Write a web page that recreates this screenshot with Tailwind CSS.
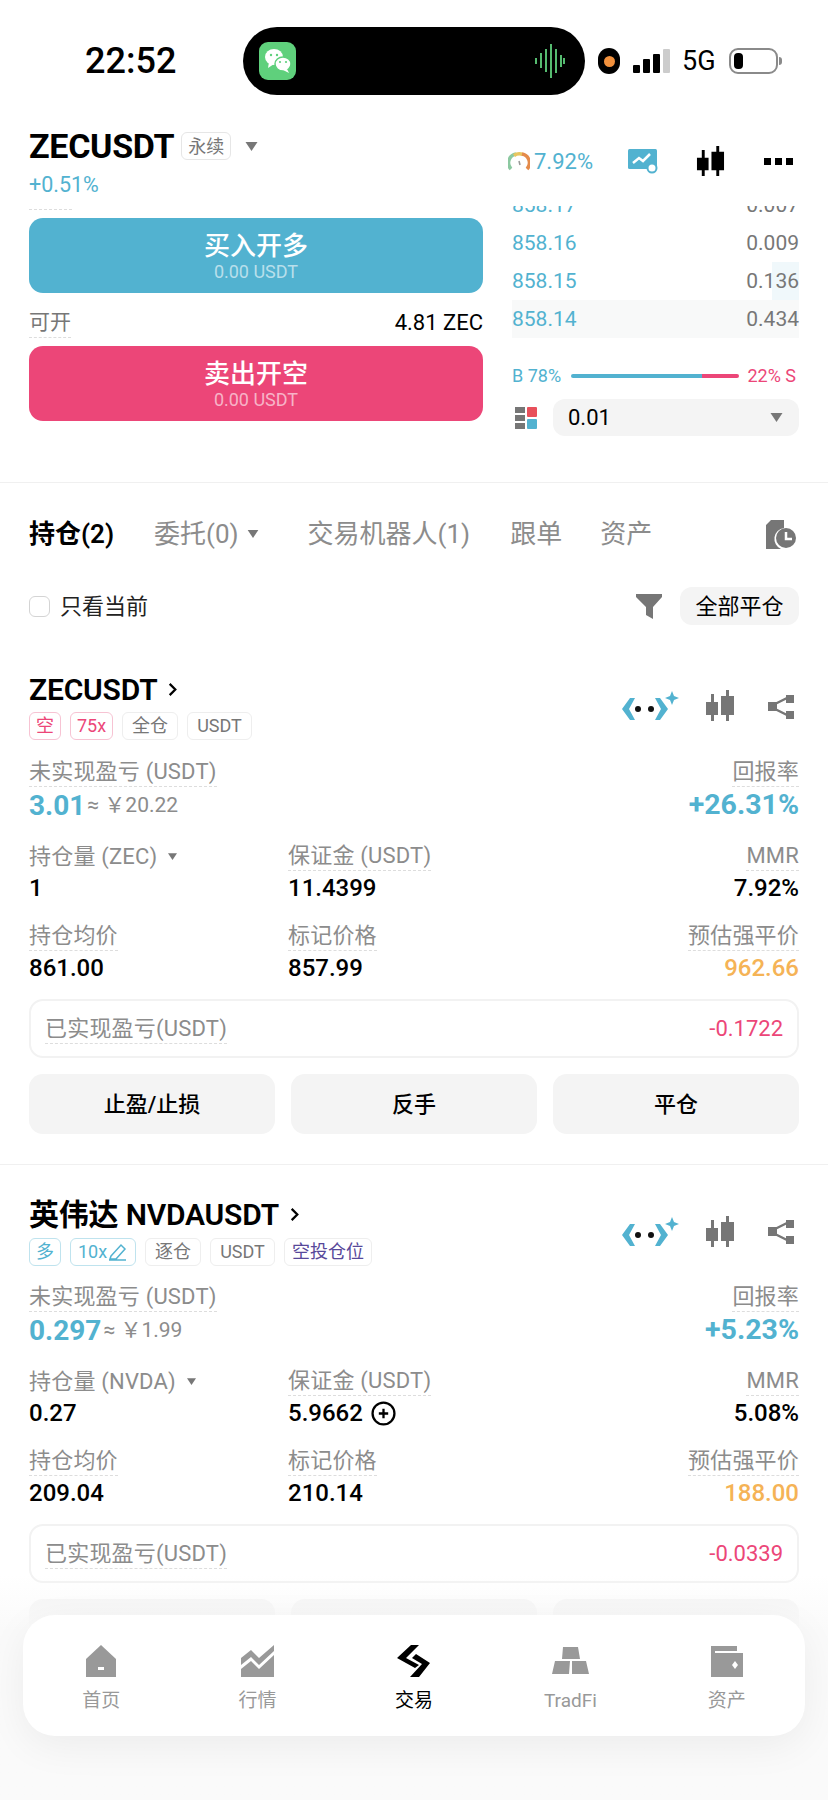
<!DOCTYPE html>
<html lang="zh-CN">
<head>
<meta charset="UTF-8">
<title>ZECUSDT</title>
<script src="https://cdn.jsdelivr.net/npm/@tailwindcss/browser@4"></script>
</head>
<body class="bg-white">
<svg class="hidden">
  <symbol id="candle" viewBox="0 0 30 32"><path fill="currentColor" d="M6 4h3v8h4v13H9v6H6v-6H1V12h5zM21 0h3v6h5v19h-5v6h-3v-6h-5V6h5z"/></symbol>
  <symbol id="robot" viewBox="0 0 58 32"><path fill="#52b2d0" d="M9 8h5L8 19l6 11H9L1 19zM34 8h5l8 11-8 11h-5l6-11z"/><circle cx="17" cy="19" r="3" fill="#111"/><circle cx="30" cy="19" r="3" fill="#111"/><path fill="#52b2d0" d="M51 1l2 5 5 2-5 2-2 5-2-5-5-2 5-2z"/></symbol>
  <symbol id="share" viewBox="0 0 27 25"><path fill="#767676" d="M1 8h9v9H1zM19 1h8v8h-8zM19 17h8v8h-8z"/><path stroke="#767676" stroke-width="2.500" d="M8 10l12-6M8 15l12 6"/></symbol>
  <symbol id="caret" viewBox="0 0 12 9"><path fill="currentColor" d="M0 0h12L6 9z"/></symbol>
  <symbol id="chev" viewBox="0 0 9 16"><path fill="none" stroke="currentColor" stroke-width="2.400" d="M1.500 2l6 6-6 6"/></symbol>
</svg>

<div class="relative w-[828px] h-[1800px] overflow-hidden bg-white text-black [font-family:Roboto,'Noto_Sans_CJK_SC',sans-serif]">

  <!-- status bar -->
  <div class="h-[118px] pt-[27px]">
    <div class="flex items-center h-[68px] pl-[85px]">
      <div class="w-[158px] text-[36px] leading-none font-medium">22:52</div>
      <div class="w-[342px] h-[68px] rounded-full bg-black flex items-center justify-between pl-[16px] pr-[20px]">
        <div class="w-[37px] h-[38px] rounded-[9px] bg-[#5fd07c] flex items-center justify-center">
          <svg width="28" height="26" viewBox="0 0 28 26"><ellipse cx="10" cy="9" rx="9" ry="8" fill="#fff"/><path fill="#fff" d="M5 14l-1 6 6-4z"/><ellipse cx="19" cy="16" rx="8" ry="7" fill="#fff" stroke="#5fd07c" stroke-width="1.500"/><path fill="#fff" d="M23 21l2 4-6-3z"/><circle cx="7" cy="7" r="1.200" fill="#5fd07c"/><circle cx="13" cy="7" r="1.200" fill="#5fd07c"/><circle cx="16" cy="14" r="1.100" fill="#5fd07c"/><circle cx="22" cy="14" r="1.100" fill="#5fd07c"/></svg>
        </div>
        <svg width="30" height="34" viewBox="0 0 30 34" stroke="#5fd07c" stroke-width="1.800"><path d="M1 14v6M6 9v15M11 5v23M16 0v34M21 5v24M26 11v12M29 14v6"/></svg>
      </div>
      <div class="ml-[13px] w-[22px] h-[26px] rounded-full bg-black flex items-center justify-center"><div class="w-[11px] h-[11px] rounded-full bg-[#f2913d]"></div></div>
      <div class="ml-[13px] flex items-end gap-[3px] h-[24px]">
        <div class="w-[7px] h-[8px] rounded-[1px] bg-black"></div>
        <div class="w-[7px] h-[14px] rounded-[1px] bg-black"></div>
        <div class="w-[7px] h-[19px] rounded-[1px] bg-black"></div>
        <div class="w-[7px] h-[24px] rounded-[1px] bg-[#ccc]"></div>
      </div>
      <div class="ml-[12px] w-[31px] text-[27px] leading-none">5G</div>
      <div class="ml-[16px] flex items-center">
        <div class="w-[49px] h-[26px] rounded-[9px] border-2 border-[#8a8a8a] p-[3px]"><div class="w-[9px] h-full rounded-[4px] bg-black"></div></div>
        <div class="ml-[1px] w-[3px] h-[8px] rounded-r bg-[#8a8a8a]"></div>
      </div>
    </div>
  </div>

  <!-- symbol header -->
  <div class="h-[88px] flex justify-between pl-[29px] pr-[35px]">
    <div>
      <div class="flex items-center h-[54px] pt-[2px]">
        <span class="text-[34px] font-bold tracking-[-0.3px]">ZECUSDT</span>
        <span class="ml-[7px] w-[50px] h-[28px] rounded-[6px] border border-[#e6e6e6] flex items-center justify-center text-[18px] text-[#777]">永续</span>
        <svg class="ml-[14px] text-[#777]" width="13" height="9"><use href="#caret"/></svg>
      </div>
      <div class="text-[21.500px] leading-[26px] text-[#52b2d0]">+0.51%</div>
    </div>
    <div class="flex items-center h-[86px]">
      <svg width="22" height="20" viewBox="0 0 22 20" fill="none" stroke-width="3.500"><path stroke="#8cc9a1" d="M3 18A9 9 0 0 1 8 3"/><path stroke="#e8c65f" d="M6 4.500A9 9 0 0 1 15 3.500"/><path stroke="#e58b4a" d="M14 3A9 9 0 0 1 19 18"/><path stroke="#999" stroke-width="1.500" d="M11 10l1 4"/></svg>
      <span class="ml-[4px] w-[94px] text-[22px] text-[#52b2d0]">7.92%</span>
      <svg width="30" height="26" viewBox="0 0 30 26"><rect y="1" width="29" height="20" rx="1.500" fill="#52b2d0"/><path d="M5 15l6-5 4 3 7-7" fill="none" stroke="#fff" stroke-width="2.500"/><circle cx="24" cy="20" r="4.500" fill="#fff" stroke="#52b2d0" stroke-width="2"/></svg>
      <svg class="ml-[38px] text-black" width="29" height="31"><use href="#candle"/></svg>
      <div class="ml-[39px] flex gap-[4px]"><i class="w-[7px] h-[7px] bg-black"></i><i class="w-[7px] h-[7px] bg-black"></i><i class="w-[7px] h-[7px] bg-black"></i></div>
    </div>
  </div>

  <!-- order buttons + book -->
  <div class="h-[277px] overflow-hidden flex pl-[29px] border-b border-[#f0f0f0]">
    <div class="w-[454px]">
      <div class="w-[43px] h-[4px] border-b border-dashed border-[#ddd]"></div>
      <div class="mt-[8px] h-[75px] rounded-[14px] bg-[#52b2d0] flex flex-col items-center justify-center text-white">
        <div class="text-[26px] leading-[32px] font-medium">买入开多</div>
        <div class="text-[18px] leading-[20px] text-white/60">0.00 USDT</div>
      </div>
      <div class="h-[53px] pt-[15px] flex justify-between items-start">
        <span class="text-[21px] leading-[29px] text-[#777] border-b border-dashed border-[#ddd]">可开</span>
        <span class="text-[22px] leading-[29px]">4.81 ZEC</span>
      </div>
      <div class="h-[75px] rounded-[14px] bg-[#ec4678] flex flex-col items-center justify-center text-white">
        <div class="text-[26px] leading-[32px] font-medium">卖出开空</div>
        <div class="text-[18px] leading-[20px] text-white/60">0.00 USDT</div>
      </div>
    </div>
    <div class="ml-[29px] w-[287px] -mt-[20px] text-[21px] leading-[38px]">
      <div class="flex justify-between h-[38px]"><span class="text-[#52b2d0]">858.17</span><span class="text-[#777]">0.007</span></div>
      <div class="flex justify-between h-[38px]"><span class="text-[#52b2d0]">858.16</span><span class="text-[#777]">0.009</span></div>
      <div class="relative flex justify-between h-[38px]">
        <div class="absolute right-0 top-0 w-[27px] h-full bg-[#f0f8fb]"></div>
        <span class="relative text-[#52b2d0]">858.15</span><span class="relative text-[#777]">0.136</span>
      </div>
      <div class="flex justify-between h-[38px] bg-[#f8f9f9]"><span class="text-[#52b2d0]">858.14</span><span class="text-[#777]">0.434</span></div>
      <div class="mt-[27px] h-[22px] flex items-center text-[18px] leading-none">
        <span class="w-[59px] text-[#52b2d0]">B 78%</span>
        <div class="w-[168px] h-[4px] rounded-full flex overflow-hidden"><div class="w-[131px] bg-[#52b2d0]"></div><div class="flex-1 bg-[#ec4678]"></div></div>
        <span class="flex-1 text-right pr-[3px] text-[#ec4678]">22% S</span>
      </div>
      <div class="mt-[12px] flex items-center">
        <svg class="ml-[3px]" width="22" height="22" viewBox="0 0 22 22"><rect width="10" height="6" fill="#767676"/><rect y="8" width="10" height="6" fill="#767676"/><rect y="16" width="10" height="6" fill="#767676"/><rect x="12" width="10" height="10" rx="1" fill="#e8505b"/><rect x="12" y="12" width="10" height="10" rx="1" fill="#52b2d0"/></svg>
        <div class="ml-[16px] w-[246px] h-[37px] rounded-[12px] bg-[#f4f4f4] flex items-center justify-between pl-[15px] pr-[16px]">
          <span class="text-[22px] leading-none">0.01</span>
          <svg class="text-[#777]" width="13" height="9"><use href="#caret"/></svg>
        </div>
      </div>
    </div>
  </div>

  <!-- tabs -->
  <div class="mt-[26px] h-[50px] flex items-center pl-[29px] pr-[32px] text-[26px] text-[#8c8c8c]">
    <span class="w-[125px] font-semibold text-black">持仓(2)</span>
    <span>委托(0)</span>
    <svg class="ml-[8px] text-[#777]" width="12" height="8"><use href="#caret"/></svg>
    <span class="ml-[49px]">交易机器人(1)</span>
    <span class="ml-[40px]">跟单</span>
    <span class="ml-[38px]">资产</span>
    <svg class="ml-auto" width="31" height="29" viewBox="0 0 31 29"><path fill="#767676" d="M1 5l5-5h13v8a11 11 0 0 0-3 21H1z"/><circle cx="21" cy="18" r="10" fill="#767676"/><path fill="none" stroke="#fff" stroke-width="2.500" d="M21 12v7h6"/></svg>
  </div>

  <!-- filter row -->
  <div class="mt-[28px] h-[38px] flex items-center pl-[29px] pr-[29px]">
    <div class="w-[21px] h-[21px] rounded-[6px] border border-[#d4d4d4]"></div>
    <span class="ml-[10px] text-[22px] text-[#222]">只看当前</span>
    <svg class="ml-auto" width="26" height="25" viewBox="0 0 26 25"><path fill="#767676" d="M0 0h26v3l-9 10v12l-7-4V13L0 3z"/></svg>
    <div class="ml-[18px] w-[119px] h-[38px] rounded-[12px] bg-[#f4f4f4] flex items-center justify-center text-[22px]">全部平仓</div>
  </div>

  <!-- position 1 -->
  <div class="mt-[47px] px-[29px] h-[493px] border-b border-[#f0f0f0]">
    <div class="flex justify-between items-center h-[68px]">
      <div>
        <div class="flex items-center h-[34px] pt-[1px]">
          <span class="text-[30px] font-semibold tracking-[-0.2px]">ZECUSDT</span>
          <svg class="ml-[11px] text-black" width="9" height="15"><use href="#chev"/></svg>
        </div>
        <div class="mt-[6px] flex gap-[9px] text-[18px] leading-none">
          <span class="w-[32px] h-[28px] rounded-[6px] border border-[#f7c3d3] flex items-center justify-center text-[#ec4678]">空</span>
          <span class="w-[43px] h-[28px] rounded-[6px] border border-[#f7c3d3] flex items-center justify-center text-[#ec4678]">75x</span>
          <span class="w-[56px] h-[28px] rounded-[6px] border border-[#eee] flex items-center justify-center text-[#777]">全仓</span>
          <span class="w-[65px] h-[28px] rounded-[6px] border border-[#eee] flex items-center justify-center text-[#777]">USDT</span>
        </div>
      </div>
      <div class="flex items-center pr-[5px]">
        <svg width="58" height="32"><use href="#robot"/></svg>
        <svg class="ml-[26px] text-[#767676]" width="30" height="32"><use href="#candle"/></svg>
        <svg class="ml-[32px]" width="27" height="25"><use href="#share"/></svg>
      </div>
    </div>
    <div class="mt-[17px] flex justify-between text-[22px] leading-[29px] tracking-[0.2px] text-[#8c8c8c]">
      <span class="border-b border-dashed border-[#ddd]">未实现盈亏 (USDT)</span>
      <span class="border-b border-dashed border-[#ddd]">回报率</span>
    </div>
    <div class="h-[37px] flex justify-between items-center">
      <div class="flex items-center"><span class="text-[28px] font-bold text-[#52b2d0]">3.01</span><span class="ml-[2px] text-[21px] text-[#8c8c8c]">≈ ￥20.22</span></div>
      <span class="text-[28.500px] font-bold text-[#52b2d0]">+26.31%</span>
    </div>
    <div class="mt-[17px] grid grid-cols-[259px_1fr_auto] text-[22px] leading-[29px] tracking-[0.2px] text-[#8c8c8c]">
      <div class="flex items-center"><span>持仓量 (ZEC)</span><svg class="ml-[11px] text-[#777]" width="9" height="7"><use href="#caret"/></svg></div>
      <div><span class="inline-block border-b border-dashed border-[#ddd]">保证金 (USDT)</span></div>
      <div class="text-right"><span class="inline-block border-b border-dashed border-[#ddd]">MMR</span></div>
      <div class="h-[34px] text-[24px] leading-[34px] tracking-normal font-medium text-black">1</div>
      <div class="h-[34px] text-[24px] leading-[34px] tracking-normal font-medium text-black">11.4399</div>
      <div class="h-[34px] text-[24px] leading-[34px] tracking-normal font-medium text-black text-right">7.92%</div>
      <div class="mt-[16px]"><span class="inline-block border-b border-dashed border-[#ddd]">持仓均价</span></div>
      <div class="mt-[16px]"><span class="inline-block border-b border-dashed border-[#ddd]">标记价格</span></div>
      <div class="mt-[16px] text-right"><span class="inline-block border-b border-dashed border-[#ddd]">预估强平价</span></div>
      <div class="h-[34px] text-[24px] leading-[34px] tracking-normal font-medium text-black">861.00</div>
      <div class="h-[34px] text-[24px] leading-[34px] tracking-normal font-medium text-black">857.99</div>
      <div class="h-[34px] text-[24px] leading-[34px] tracking-normal font-medium text-[#f5b356] text-right">962.66</div>
    </div>
    <div class="mt-[14px] h-[59px] rounded-[14px] border-2 border-[#f2f2f2] flex items-center justify-between px-[14px]">
      <span class="text-[22px] leading-[29px] tracking-[0.2px] text-[#8c8c8c] border-b border-dashed border-[#ddd]">已实现盈亏(USDT)</span>
      <span class="text-[22px] text-[#ec4678]">-0.1722</span>
    </div>
    <div class="mt-[16px] grid grid-cols-3 gap-[16px] text-[22px] font-medium">
      <div class="h-[60px] rounded-[14px] bg-[#f4f4f4] flex items-center justify-center">止盈/止损</div>
      <div class="h-[60px] rounded-[14px] bg-[#f4f4f4] flex items-center justify-center">反手</div>
      <div class="h-[60px] rounded-[14px] bg-[#f4f4f4] flex items-center justify-center">平仓</div>
    </div>
  </div>

  <!-- position 2 -->
  <div class="mt-[32px] px-[29px]">
    <div class="flex justify-between items-center h-[69px]">
      <div>
        <div class="flex items-center h-[34px] pt-[1px]">
          <span class="text-[30px] font-semibold tracking-[-0.2px]">英伟达 NVDAUSDT</span>
          <svg class="ml-[11px] text-black" width="9" height="15"><use href="#chev"/></svg>
        </div>
        <div class="mt-[7px] flex gap-[9px] text-[18px] leading-none">
          <span class="w-[32px] h-[28px] rounded-[6px] border border-[#bfe3ee] flex items-center justify-center text-[#52b2d0]">多</span>
          <span class="w-[66px] h-[28px] rounded-[6px] border border-[#bfe3ee] flex items-center justify-center text-[#52b2d0]">
            10x<svg class="ml-[1px]" width="20" height="20" viewBox="0 0 20 20" fill="none" stroke="#52b2d0" stroke-width="1.500"><path d="M3 14L13 3l4 4-9 10H2zM1 18h17"/></svg>
          </span>
          <span class="w-[56px] h-[28px] rounded-[6px] border border-[#eee] flex items-center justify-center text-[#777]">逐仓</span>
          <span class="w-[65px] h-[28px] rounded-[6px] border border-[#eee] flex items-center justify-center text-[#777]">USDT</span>
          <span class="w-[88px] h-[28px] rounded-[6px] border border-[#eee] flex items-center justify-center text-[#57489a]">空投仓位</span>
        </div>
      </div>
      <div class="flex items-center pr-[5px]">
        <svg width="58" height="32"><use href="#robot"/></svg>
        <svg class="ml-[26px] text-[#767676]" width="30" height="32"><use href="#candle"/></svg>
        <svg class="ml-[32px]" width="27" height="25"><use href="#share"/></svg>
      </div>
    </div>
    <div class="mt-[16px] flex justify-between text-[22px] leading-[29px] tracking-[0.2px] text-[#8c8c8c]">
      <span class="border-b border-dashed border-[#ddd]">未实现盈亏 (USDT)</span>
      <span class="border-b border-dashed border-[#ddd]">回报率</span>
    </div>
    <div class="h-[37px] flex justify-between items-center">
      <div class="flex items-center"><span class="text-[28px] font-bold text-[#52b2d0]">0.297</span><span class="ml-[2px] text-[21px] text-[#8c8c8c]">≈ ￥1.99</span></div>
      <span class="text-[28.500px] font-bold text-[#52b2d0]">+5.23%</span>
    </div>
    <div class="mt-[17px] grid grid-cols-[259px_1fr_auto] text-[22px] leading-[29px] tracking-[0.2px] text-[#8c8c8c]">
      <div class="flex items-center"><span>持仓量 (NVDA)</span><svg class="ml-[11px] text-[#777]" width="9" height="7"><use href="#caret"/></svg></div>
      <div><span class="inline-block border-b border-dashed border-[#ddd]">保证金 (USDT)</span></div>
      <div class="text-right"><span class="inline-block border-b border-dashed border-[#ddd]">MMR</span></div>
      <div class="h-[34px] text-[24px] leading-[34px] tracking-normal font-medium text-black">0.27</div>
      <div class="h-[34px] text-[24px] leading-[34px] tracking-normal font-medium text-black flex items-center">5.9662
        <svg class="ml-[8px]" width="25" height="25" viewBox="0 0 24 24" fill="none" stroke="#000" stroke-width="2.200"><circle cx="12" cy="12" r="10.500"/><path d="M12 7.500v9M7.500 12h9"/></svg>
      </div>
      <div class="h-[34px] text-[24px] leading-[34px] tracking-normal font-medium text-black text-right">5.08%</div>
      <div class="mt-[16px]"><span class="inline-block border-b border-dashed border-[#ddd]">持仓均价</span></div>
      <div class="mt-[16px]"><span class="inline-block border-b border-dashed border-[#ddd]">标记价格</span></div>
      <div class="mt-[16px] text-right"><span class="inline-block border-b border-dashed border-[#ddd]">预估强平价</span></div>
      <div class="h-[34px] text-[24px] leading-[34px] tracking-normal font-medium text-black">209.04</div>
      <div class="h-[34px] text-[24px] leading-[34px] tracking-normal font-medium text-black">210.14</div>
      <div class="h-[34px] text-[24px] leading-[34px] tracking-normal font-medium text-[#f5b356] text-right">188.00</div>
    </div>
    <div class="mt-[14px] h-[59px] rounded-[14px] border-2 border-[#f2f2f2] flex items-center justify-between px-[14px]">
      <span class="text-[22px] leading-[29px] tracking-[0.2px] text-[#8c8c8c] border-b border-dashed border-[#ddd]">已实现盈亏(USDT)</span>
      <span class="text-[22px] text-[#ec4678]">-0.0339</span>
    </div>
    <div class="mt-[16px] grid grid-cols-3 gap-[16px]">
      <div class="h-[60px] rounded-[14px] bg-[#f4f4f4]"></div>
      <div class="h-[60px] rounded-[14px] bg-[#f4f4f4]"></div>
      <div class="h-[60px] rounded-[14px] bg-[#f4f4f4]"></div>
    </div>
  </div>

  <!-- bottom fade + tab bar -->
  <div class="absolute left-0 right-0 bottom-0 h-[225px] bg-gradient-to-b from-white/0 to-[#fafafa] to-[25%]"></div>
  <div class="absolute left-[23px] top-[1615px] w-[782px] h-[121px] rounded-[32px] bg-white shadow-[0_10px_40px_rgba(0,0,0,0.06)] grid grid-cols-5 text-[19px] text-[#999]">
    <div class="flex flex-col items-center pt-[30px]">
      <svg width="30" height="32" viewBox="0 0 30 32"><path fill="#999" d="M15 0l15 14v18H0V14z"/><rect x="12" y="22" width="6" height="3" fill="#fff"/></svg>
      <span class="mt-[10px] leading-[28px]">首页</span>
    </div>
    <div class="flex flex-col items-center pt-[30px]">
      <svg width="33" height="32" viewBox="0 0 33 32"><path fill="#999" d="M0 13l10-8 8 8L33 0v6L18 20 10 12 0 20zM0 24l10-8 8 8L33 10v22H0z"/></svg>
      <span class="mt-[10px] leading-[28px]">行情</span>
    </div>
    <div class="flex flex-col items-center pt-[30px] text-black">
      <svg width="33" height="32" viewBox="0 0 33 32"><path fill="#000" d="M14 0h8L9 13l13 7-4 3L0 13zM19 9l14 9-11 14h-9l12-13-10-6z"/></svg>
      <span class="mt-[10px] leading-[28px]">交易</span>
    </div>
    <div class="flex flex-col items-center pt-[30px]">
      <svg width="39" height="32" viewBox="0 0 39 32"><path fill="#999" d="M12 2h15l2 12H11zM4 16h15l-1 13H1zM21 16h14l3 13H21z"/></svg>
      <span class="mt-[10px] leading-[28px]">TradFi</span>
    </div>
    <div class="flex flex-col items-center pt-[30px]">
      <svg width="32" height="32" viewBox="0 0 32 32"><path fill="#999" d="M0 1h26v5H4v2h28v24H0z"/><path fill="#fff" d="M24 16l3 4-3 4-3-4z"/></svg>
      <span class="mt-[10px] leading-[28px]">资产</span>
    </div>
  </div>
</div>
</body>
</html>
